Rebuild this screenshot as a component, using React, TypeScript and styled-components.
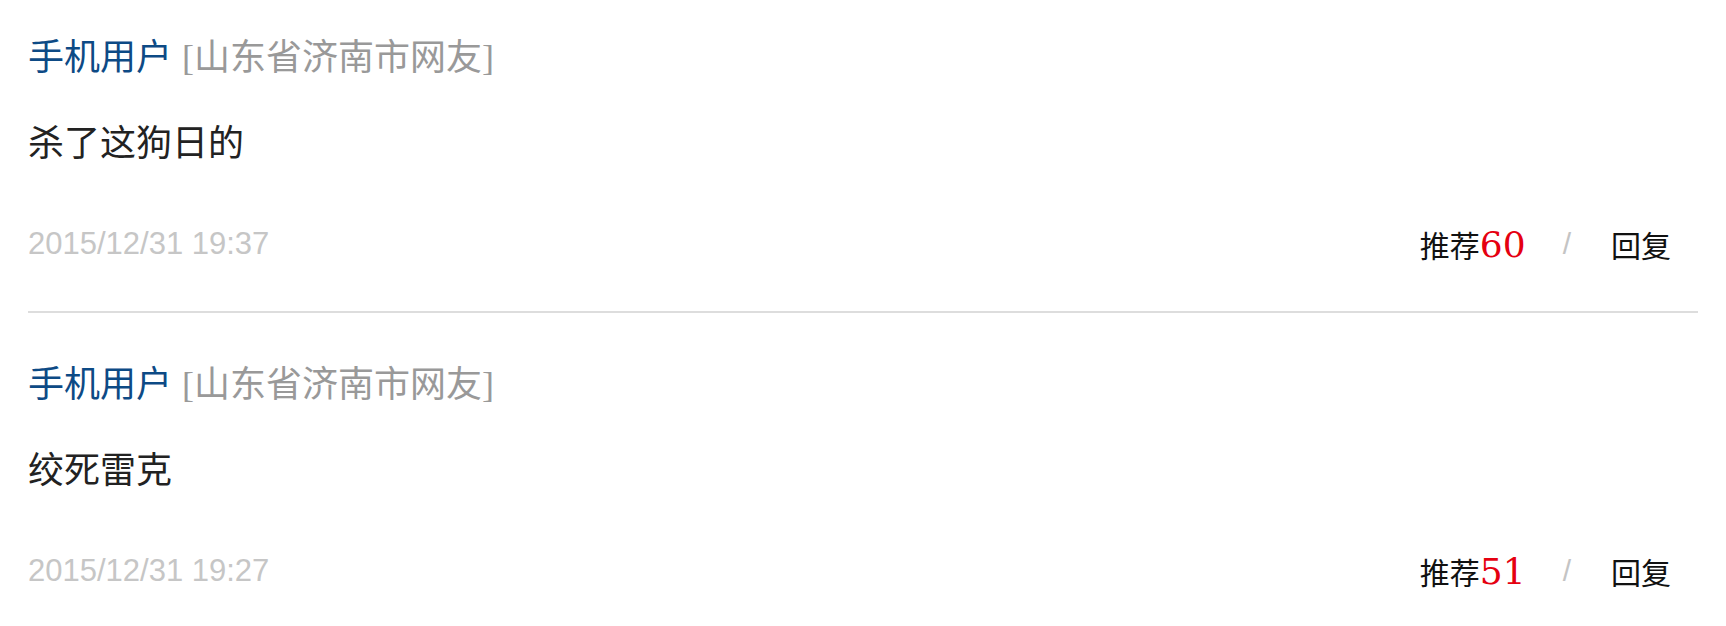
import React from "react";
import styled, { createGlobalStyle } from "styled-components";

const GlobalStyle = createGlobalStyle`
  html, body { margin: 0; padding: 0; background: #fff; }
  body { font-family: "Liberation Serif", "Noto Sans CJK SC", serif; }
`;

const List = styled.div`
  padding: 34px 28px 0 28px;
`;

const Item = styled.div`
  border-bottom: 2px solid #dddddd;
  padding-bottom: 43px;
  & + & { padding-top: 48px; }
`;

const Header = styled.div`
  font-size: 36px;
  line-height: 48px;
  height: 48px;
  white-space: nowrap;
`;

const User = styled.span`
  color: #0d4a85;
`;

const Location = styled.span`
  color: #999999;
  margin-left: 10px;
`;

const Content = styled.div`
  margin-top: 38px;
  font-size: 36px;
  line-height: 48px;
  height: 48px;
  color: #222222;
`;

const Footer = styled.div`
  margin-top: 52px;
  height: 48px;
  display: flex;
  align-items: center;
  justify-content: space-between;
  padding-right: 27px;
`;

const Time = styled.span`
  font-family: "Liberation Sans", Arial, sans-serif;
  font-size: 31px;
  color: #c6c6c6;
`;

const Actions = styled.div`
  display: flex;
  align-items: center;
  font-size: 30px;
  color: #111111;
`;

const Recommend = styled.span`
  display: inline-flex;
  align-items: baseline;
`;

const Count = styled.span`
  font-family: "DejaVu Serif", "Liberation Serif", serif;
  font-size: 36px;
  color: #e50010;
`;

const Sep = styled.span`
  color: #c4c4c4;
  font-family: "Liberation Sans", sans-serif;
  font-size: 30px;
  margin: 0 40px 0 37px;
`;

const Reply = styled.span``;

const data = [
  { text: "杀了这狗日的", time: "2015/12/31 19:37", count: 60 },
  { text: "绞死雷克", time: "2015/12/31 19:27", count: 51 },
];

export default function App() {
  return (
    <>
      <GlobalStyle />
      <List>
        {data.map((d, i) => (
          <Item key={i}>
            <Header>
              <User>手机用户</User>
              <Location>[山东省济南市网友]</Location>
            </Header>
            <Content>{d.text}</Content>
            <Footer>
              <Time>{d.time}</Time>
              <Actions>
                <Recommend>
                  推荐<Count>{d.count}</Count>
                </Recommend>
                <Sep>/</Sep>
                <Reply>回复</Reply>
              </Actions>
            </Footer>
          </Item>
        ))}
      </List>
    </>
  );
}
